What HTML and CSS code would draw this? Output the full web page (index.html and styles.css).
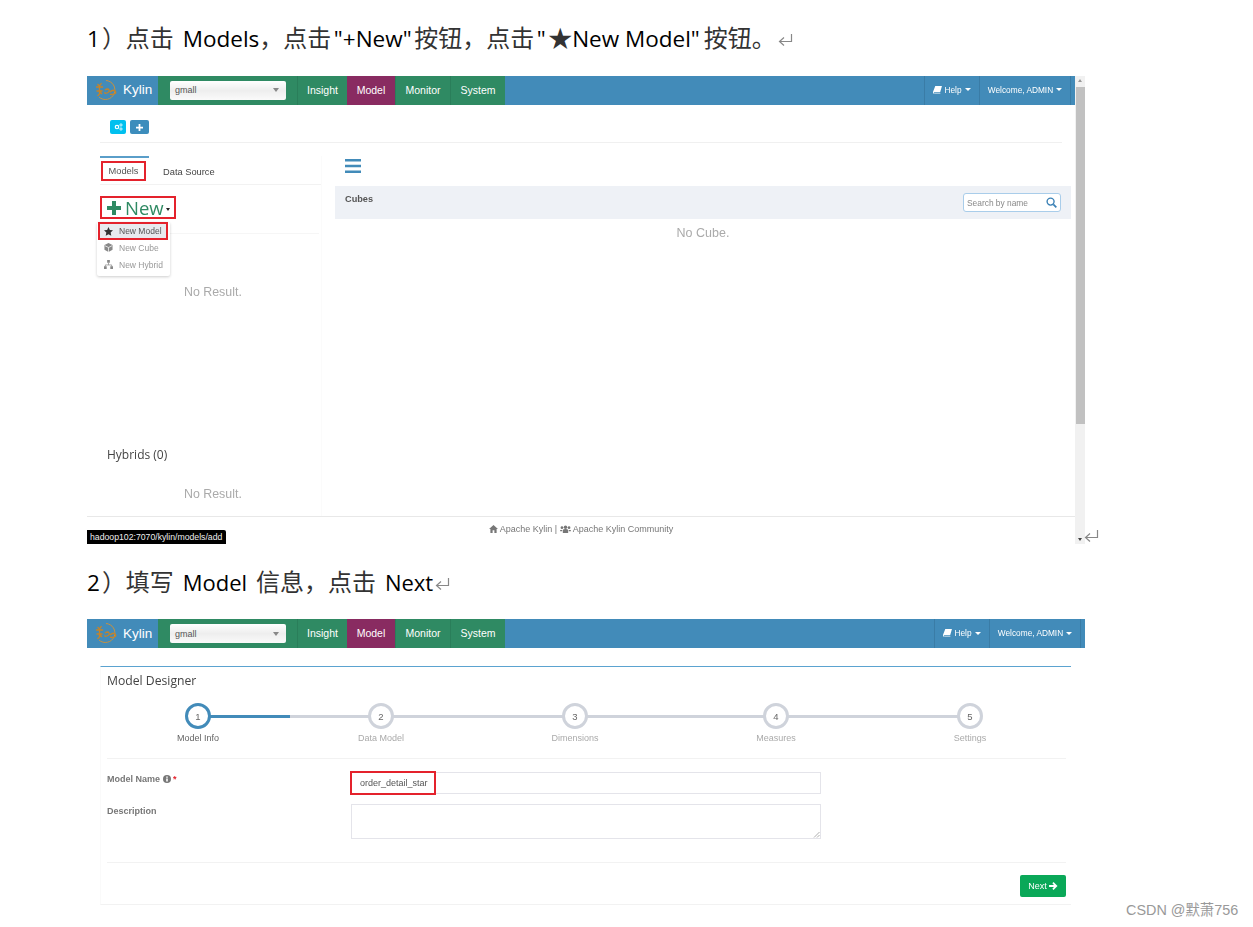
FILE: index.html
```html
<!DOCTYPE html>
<html lang="zh">
<head>
<meta charset="utf-8">
<title>Kylin Model</title>
<link rel="stylesheet" href="styles.css">
</head>
<body>
<main class="doc">
  <p class="step-title step-title-1"><span class="en num">1</span>）点击 <span class="en">Models</span>，点击<span class="en quoted">"+New"</span>按钮，点击<span class="en quoted">"</span>★<span class="en model-q">New Model"</span>按钮。<svg class="ret" viewBox="0 0 15 14"><path d="M13.500 1v7.500H2M6 4.500 1.500 8.500 6 12.500" fill="none" stroke="#888" stroke-width="1.200"/></svg></p>

  <section class="fig fig-one">
    <div class="page">
      <nav class="nav">
        <a class="brand"><svg class="logo" viewBox="0 0 24 22"><path d="M11 1.500a9.500 9.500 0 1 1-7 16.500" fill="none" stroke="#c8913f" stroke-width="1"/><path d="M1 8h7M2.500 5l2 2 2-3M4.500 8v7l-2 2M1.500 12h6M7 15l-2-2M10 11q3-2 4 0t-2 3-2-1M15 13q3-3 5-1t-1 3-4 0" fill="none" stroke="#c5842a" stroke-width="1.300"/></svg><span>Kylin</span></a>
        <div class="project"><div class="select"><span>gmall</span><i class="caret-gray"></i></div></div>
        <a class="nav-link nl-insight">Insight</a><a class="nav-link nl-model active">Model</a><a class="nav-link nl-monitor">Monitor</a><a class="nav-link nl-system">System</a>
        <div class="nav-right">
          <a class="nav-r help"><svg class="ic-book" viewBox="0 0 10 9"><path d="M2.500 0H10L8 7H1.500Q.5 7 1 8t1 .5h6l.5-1L8 9H1.500Q-.5 8.500 0 6.500z" fill="#fff"/></svg>Help<i class="caret"></i></a>
          <a class="nav-r welcome">Welcome, ADMIN<i class="caret"></i></a>
        </div>
      </nav>
      <div class="toolbar">
        <button class="mini cyan"><svg viewBox="0 0 12 10"><circle cx="4" cy="5" r="2.300" fill="none" stroke="#fff" stroke-width="1.600"/><circle cx="9.300" cy="2.300" r="1.500" fill="none" stroke="#fff" stroke-width="1.100"/><circle cx="9.300" cy="7.700" r="1.500" fill="none" stroke="#fff" stroke-width="1.100"/></svg></button>
        <button class="mini blue"><svg viewBox="0 0 8 8"><path d="M3 0h2v3h3v2H5v3H3V5H0V3h3z" fill="#fff"/></svg></button>
      </div>
      <div class="content">
        <aside class="left">
          <div class="tabs">
            <div class="tab active"><span class="mark">Models</span></div>
            <div class="tab">Data Source</div>
          </div>
          <div class="new-row">
            <button class="new-btn"><svg class="ic-plus" viewBox="0 0 14 14"><path d="M5 0h4v5h5v4H9v5H5V9H0V5h5z" fill="#2f8a63"/></svg><span>New</span><i class="caret-dark"></i></button>
            <ul class="menu">
              <li class="menu-item current"><svg viewBox="0 0 10 10"><path d="M5 0l1.500 3.300 3.500.4-2.600 2.400.7 3.600L5 8 1.900 9.700l.7-3.600L0 3.700l3.500-.4z" fill="#333"/></svg>New Model</li>
              <li class="menu-item"><svg viewBox="0 0 10 10"><path d="M5 0l4.500 2.300v5.200L5 10 .5 7.500V2.300z" fill="#888"/><path d="M1 3l4 2 4-2M5 5v5" fill="none" stroke="#fff" stroke-width=".8"/></svg>New Cube</li>
              <li class="menu-item"><svg viewBox="0 0 10 10"><path d="M3.500 0h3v3h-3zM0 7h3v3H0zM7 7h3v3H7z" fill="#888"/><path d="M5 3v2.500M1.500 7V5.500h7V7" fill="none" stroke="#888" stroke-width=".8"/></svg>New Hybrid</li>
            </ul>
          </div>
          <p class="empty empty-models">No Result.</p>
          <h3 class="hybrids">Hybrids (0)</h3>
          <p class="empty empty-hybrids">No Result.</p>
        </aside>
        <div class="right">
          <svg class="burger" viewBox="0 0 16 14"><path d="M0 0h16v2.600H0zM0 5.700h16v2.600H0zM0 11.400h16V14H0z" fill="#428bb9"/></svg>
          <div class="cubes-bar">
            <strong>Cubes</strong>
            <div class="search"><span>Search by name</span><svg viewBox="0 0 12 12"><circle cx="5" cy="5" r="3.800" fill="none" stroke="#3a80b5" stroke-width="1.500"/><path d="M8 8l3.300 3.300" stroke="#3a80b5" stroke-width="1.800"/></svg></div>
          </div>
          <p class="no-cube">No Cube.</p>
        </div>
      </div>
      <footer class="foot"><svg viewBox="0 0 10 9"><path d="M5 0l5 4.500H8.500V9H6V6H4v3H1.500V4.500H0z" fill="#777"/></svg> Apache Kylin | <svg class="ic-users" viewBox="0 0 12 9"><circle cx="6" cy="2.500" r="2" fill="#777"/><circle cx="2" cy="3" r="1.500" fill="#777"/><circle cx="10" cy="3" r="1.500" fill="#777"/><path d="M3 9V6q0-1.500 3-1.500T9 6v3zM0 7V5.500h2.300V7zM9.700 5.500H12V7H9.700z" fill="#777"/></svg> Apache Kylin Community</footer>
    </div>
    <div class="scrollbar"><i class="arrow-up"></i><div class="thumb"></div><i class="arrow-down"></i></div>
    <div class="status">hadoop102:7070/kylin/models/add</div>
    <svg class="ret ret-fig" viewBox="0 0 15 14"><path d="M13.500 1v7.500H2M6 4.500 1.500 8.500 6 12.500" fill="none" stroke="#888" stroke-width="1.200"/></svg>
  </section>

  <p class="step-title step-title-2"><span class="en num">2</span>）填写 <span class="en en-small">Model</span> 信息，点击 <span class="en en-small">Next</span><svg class="ret" viewBox="0 0 15 14"><path d="M13.500 1v7.500H2M6 4.500 1.500 8.500 6 12.500" fill="none" stroke="#888" stroke-width="1.200"/></svg></p>

  <section class="fig fig-two">
    <div class="page">
      <nav class="nav">
        <a class="brand"><svg class="logo" viewBox="0 0 24 22"><path d="M11 1.500a9.500 9.500 0 1 1-7 16.500" fill="none" stroke="#c8913f" stroke-width="1"/><path d="M1 8h7M2.500 5l2 2 2-3M4.500 8v7l-2 2M1.500 12h6M7 15l-2-2M10 11q3-2 4 0t-2 3-2-1M15 13q3-3 5-1t-1 3-4 0" fill="none" stroke="#c5842a" stroke-width="1.300"/></svg><span>Kylin</span></a>
        <div class="project"><div class="select"><span>gmall</span><i class="caret-gray"></i></div></div>
        <a class="nav-link nl-insight">Insight</a><a class="nav-link nl-model active">Model</a><a class="nav-link nl-monitor">Monitor</a><a class="nav-link nl-system">System</a>
        <div class="nav-right">
          <a class="nav-r help"><svg class="ic-book" viewBox="0 0 10 9"><path d="M2.500 0H10L8 7H1.500Q.5 7 1 8t1 .5h6l.5-1L8 9H1.500Q-.5 8.500 0 6.500z" fill="#fff"/></svg>Help<i class="caret"></i></a>
          <a class="nav-r welcome">Welcome, ADMIN<i class="caret"></i></a>
        </div>
      </nav>
      <div class="designer">
        <h2 class="designer-title">Model Designer</h2>
        <ol class="wizard">
          <li class="wstep current"><b>1</b><span>Model Info</span></li>
          <li class="wstep"><b>2</b><span>Data Model</span></li>
          <li class="wstep"><b>3</b><span>Dimensions</span></li>
          <li class="wstep"><b>4</b><span>Measures</span></li>
          <li class="wstep"><b>5</b><span>Settings</span></li>
        </ol>
        <div class="form">
          <div class="field">
            <label class="field-label">Model Name <svg viewBox="0 0 10 10"><circle cx="5" cy="5" r="5" fill="#777"/><path d="M4 2h2v1.500H4zM4 4.500h2V8H4z" fill="#fff"/></svg> <em>*</em></label>
            <div class="input"><span class="input-mark">order_detail_star</span></div>
          </div>
          <div class="field">
            <label class="field-label">Description</label>
            <div class="textarea"><svg viewBox="0 0 7 7"><path d="M6.500 1 1 6.500M6.500 4 4 6.500" stroke="#999" stroke-width=".8"/></svg></div>
          </div>
        </div>
        <div class="actions">
          <button class="next">Next <svg viewBox="0 0 10 9"><path d="M5 0l4.500 4.500L5 9 3.700 7.700 5.500 5.700H0V3.300h5.500L3.700 1.300z" fill="#fff"/></svg></button>
        </div>
      </div>
    </div>
  </section>
  <div class="watermark">CSDN @默萧756</div>
</main>
</body>
</html>
```
FILE: styles.css
```css
* { box-sizing: border-box; }
html, body { margin: 0; padding: 0; background: #fff; }
body { width: 1253px; height: 927px; overflow: hidden; font-family: "Liberation Sans", "Noto Sans CJK SC", sans-serif; }
.doc { position: relative; height: 927px; padding: 19px 0 0 87px; }
p, h2, h3, ul, ol { margin: 0; padding: 0; list-style: none; }
button { font-family: inherit; border: 0; padding: 0; }

.step-title { font: 24px/36px "Noto Sans CJK SC", sans-serif; color: #333; height: 36px; white-space: nowrap; word-spacing: 3.500px; }
.step-title .en { font: 22.500px "Open Sans", sans-serif; color: #000; word-spacing: 0; }
.step-title .en-small { font-size: 22px; }
.step-title .num { margin-right: 2px; }
.step-title .quoted { margin: 0 2.500px; }
.step-title .model-q { margin-right: 4px; }
.step-title-1 { margin-bottom: 21px; }
.step-title-2 { margin: 19px 0 20px; }
.ret { width: 15px; height: 14px; margin-left: 2px; }
.ret-fig { position: absolute; left: 997px; bottom: 1px; margin: 0; }

.fig { position: relative; display: flex; width: 998px; }
.fig-one { height: 468px; }
.fig-two { height: 287px; }
.page { flex: 1; display: flex; flex-direction: column; min-width: 0; filter: blur(.35px); }

.nav { display: flex; height: 29px; background: #428bb9; color: #fff; font-size: 10.500px; flex: none; }
.fig-one .nav { height: 28.500px; }
.brand { display: flex; align-items: center; gap: 4px; width: 71px; padding: 0 0 1px 8px; font-size: 13.500px; }
.logo { width: 24px; height: 22px; }
.project { width: 139px; padding-left: 12px; background: #2f8a63; display: flex; align-items: center; }
.select { display: flex; align-items: center; justify-content: space-between; width: 116px; height: 19px; padding: 0 7px 0 5px; border-radius: 2px; background: linear-gradient(#fff, #eee 50%, #fafafa); color: #555; font-size: 9px; }
.caret-gray { border: 3px solid transparent; border-top: 4px solid #888; border-bottom: 0; }
.nav-link { display: flex; align-items: center; justify-content: center; padding-bottom: 1.500px; background: #2f8a63; border-left: 1px solid #2a7e5a; }
.nl-insight { width: 50px; }
.nl-model { width: 48px; }
.nl-monitor { width: 55px; }
.nl-system { width: 55px; }
.nav-link.active { background: #892b61; border-left: 0; }
.nav-right { margin-left: auto; display: flex; padding-right: 4px; font-size: 8.300px; }
.nav-r { display: flex; align-items: center; justify-content: center; padding-bottom: 1px; border-left: 1px solid #3a7ca6; }
.help { width: 55px; }
.welcome { width: 92px; border-right: 1px solid #3a7ca6; }
.ic-book { width: 9px; height: 8px; margin-right: 2px; }
.caret { margin-left: 3px; border: 3px solid transparent; border-top: 3px solid #fff; border-bottom: 0; }

.toolbar { display: flex; gap: 4px; height: 38.500px; margin: 0 13px; padding: 15.500px 0 0 10px; border-bottom: 1px solid #f0f0f0; flex: none; }
.mini { display: flex; align-items: center; justify-content: center; width: 16px; height: 14px; border-radius: 2px; }
.mini svg { width: 9px; height: 8px; }
.mini.cyan { background: #00c0ef; }
.mini.blue { width: 19px; background: #3c8dbc; }
.mini.blue svg { width: 7px; height: 7px; }

.content { flex: 1; display: flex; padding: 13px 4px 0 13px; min-height: 0; }
.left { width: 222px; flex: none; border-right: 1px solid #fbfbfb; color: #555; }
.tabs { display: flex; height: 29px; border-bottom: 1px solid #f2f2f2; font-size: 9.300px; }
.tab { display: flex; align-items: center; padding: 3px 0 0 14px; color: #444; }
.tab.active { width: 49px; padding: 0 0 0 1px; border-top: 2px solid #5a9ec9; }
.mark { display: block; width: 45px; height: 20px; line-height: 17px; text-align: center; border: 2px solid #e4222c; color: #555; }

.new-row { position: relative; height: 49px; padding-top: 11px; margin-right: 2px; border-bottom: 1px solid #f6f6f6; }
.new-btn { display: flex; align-items: center; width: 76px; height: 23px; background: #fff; border: 2px solid #e4222c; padding-left: 5px; color: #2f8a63; font: 18.500px "Open Sans", sans-serif; }
.ic-plus { width: 14px; height: 14px; margin-right: 4px; }
.caret-dark { margin: 4px 0 0 2px; border: 2.500px solid transparent; border-top: 3px solid #222; border-bottom: 0; }
.menu { position: absolute; left: -3px; top: 37px; width: 73px; height: 54px; padding-top: 1px; background: #fff; border-radius: 2px; box-shadow: 0 1px 3px rgba(0,0,0,.2); z-index: 2; font-size: 8.500px; color: #999; }
.menu-item { display: flex; align-items: center; height: 17px; padding-left: 7px; gap: 6px; }
.menu-item svg { width: 9px; height: 9px; flex: none; }
.menu-item.current { width: 68px; height: 16px; margin: 0 0 0 2px; padding-left: 5px; background: #e8eaee; color: #555; outline: 2px solid #e4222c; outline-offset: -1px; }

.empty { font-size: 12.400px; line-height: 16px; color: #aaa; padding-left: 84px; }
.empty-models { margin-top: 50px; }
.hybrids { margin: 147px 0 0 7px; font: 12px/16px "Open Sans", sans-serif; color: #444; }
.empty-hybrids { margin-top: 23px; }

.right { flex: 1; margin-left: 13px; min-width: 0; padding-top: 3px; }
.burger { display: block; width: 16px; height: 14px; margin: 0 0 13px 10px; }
.cubes-bar { display: flex; justify-content: space-between; height: 33px; padding: 7px 10px 0; background: #eef1f6; }
.cubes-bar strong { font-size: 9.200px; line-height: 13px; color: #555; }
.search { display: flex; align-items: center; justify-content: space-between; width: 98px; height: 19px; padding: 0 3px; background: #fff; border: 1px solid #a9cdea; border-radius: 3px; color: #888; font-size: 8.400px; }
.search svg { width: 11px; height: 11px; }
.no-cube { margin-top: 6px; text-align: center; font-size: 12.500px; line-height: 16px; color: #aaa; }

.foot { height: 28px; flex: none; border-top: 1px solid #e8e8e8; text-align: center; font-size: 9px; line-height: 25px; color: #777; }
.foot svg { width: 9px; height: 8px; vertical-align: -.5px; }
.foot .ic-users { width: 11px; }

.scrollbar { width: 10px; flex: none; display: flex; flex-direction: column; align-items: center; background: #f1f1f1; }
.thumb { width: 9px; height: 337px; margin-top: 5px; background: #c1c1c1; }
.arrow-up { margin-top: 3px; height: 0; border: 2.500px solid transparent; border-bottom: 3px solid #999; border-top: 0; }
.arrow-down { margin-top: auto; margin-bottom: 3px; height: 0; border: 2.500px solid transparent; border-top: 3px solid #444; border-bottom: 0; }
.status { position: absolute; left: 0; bottom: 0; width: 139px; height: 14px; padding-left: 3px; background: #000; color: #eee; font-size: 8.700px; line-height: 14px; border-top-right-radius: 2px; }

.designer { margin: 18px 14px 0 13px; height: 239px; padding: 6px 5px 0 6px; border-top: 1px solid #5ba3d0; border-left: 1px solid #fafafa; border-bottom: 1px solid #f2f2f2; color: #555; }
.designer-title { font: 400 12.200px/16px "Open Sans", sans-serif; color: #444; }
.wizard { position: relative; display: grid; grid-template-columns: 182px 184px 204px 198px 190px; margin-top: 14px; padding-bottom: 14px; border-bottom: 1px solid #f2f2f2; }
.wizard::before { content: ""; position: absolute; left: 91px; top: 12px; width: 772px; height: 3px; background: #cfd3db; }
.wizard::after { content: ""; position: absolute; left: 91px; top: 12px; width: 92px; height: 3px; background: #428bb9; }
.wstep { position: relative; z-index: 1; display: flex; flex-direction: column; align-items: center; font-size: 9px; color: #aaa; }
.wstep b { display: flex; align-items: center; justify-content: center; width: 26px; height: 26px; margin-bottom: 3px; border: 3.500px solid #cfd3db; border-radius: 50%; background: #fff; color: #666; font-size: 9.500px; font-weight: 400; }
.wstep span { line-height: 12px; }
.wstep.current { color: #666; }
.wstep.current b { border-color: #428bb9; }

.form { padding-top: 13px; height: 104px; border-bottom: 1px solid #f2f2f2; }
.field { display: flex; margin-bottom: 10px; }
.field-label { width: 244px; padding-top: 1px; font-size: 9px; font-weight: 700; line-height: 12px; color: #777; }
.field-label svg { width: 8px; height: 8px; vertical-align: -1px; }
.field-label em { color: #e4222c; font-style: normal; }
.input { width: 470px; height: 22px; border: 1px solid #e4e4ea; }
.input-mark { display: block; width: 86px; height: 24px; margin: -2px 0 0 -2px; border: 2px solid #e4222c; background: #fff; padding-left: 8px; font-size: 9px; line-height: 20px; color: #555; }
.textarea { position: relative; width: 470px; height: 35px; border: 1px solid #e4e4ea; }
.textarea svg { position: absolute; right: 0; bottom: 0; width: 7px; height: 7px; }
.actions { display: flex; justify-content: flex-end; padding-top: 12px; }
.next { display: flex; align-items: center; justify-content: center; gap: 2px; width: 46px; height: 22px; border-radius: 2px; background: #0aa858; color: #fff; font-size: 9px; }
.next svg { width: 9px; height: 8px; }

.watermark { position: absolute; left: 1126px; top: 901px; font-size: 14.400px; line-height: 18px; color: #999; white-space: nowrap; }
```
